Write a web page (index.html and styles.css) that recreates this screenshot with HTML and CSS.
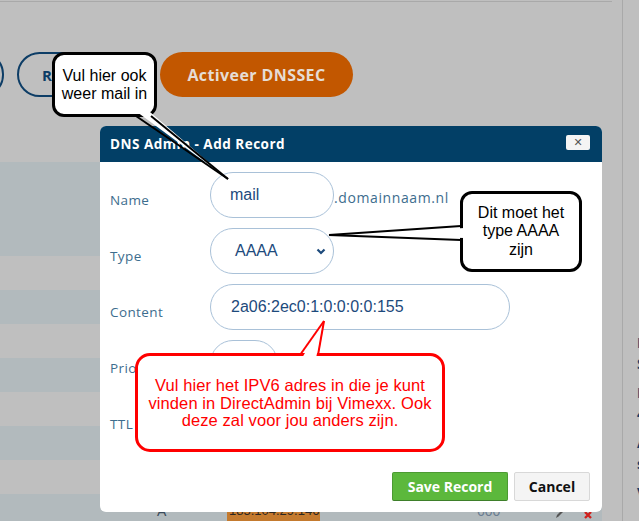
FILE: index.html
```html
<!DOCTYPE html>
<html lang="nl">
<head>
<meta charset="utf-8">
<title>DNS Admin</title>
<link rel="stylesheet" href="styles.css">
</head>
<body>
<div class="page">
  <div class="main">
    <div class="topline"></div>
    <div class="actions">
      <span class="pill pill-outline pill-cut"></span>
      <span class="pill pill-outline pill-records">Records</span>
      <span class="pill pill-orange">Activeer DNSSEC</span>
    </div>
    <div class="table">
      <div class="row row-blue row-head"></div>
      <div class="row"></div>
      <div class="row row-blue"></div>
      <div class="row"></div>
      <div class="row row-blue"></div>
      <div class="row"></div>
      <div class="row row-blue"></div>
      <div class="row"></div>
      <div class="row row-blue row-last">
        <span class="cell-type">A</span>
        <span class="cell-ip">185.104.29.146</span>
        <span class="cell-ttl">600</span>
        <span class="cell-act">
          <svg class="ico" width="10" height="12" viewBox="0 0 10 12"><path d="M1 10 L2 7 L7 2 L8.5 3.5 L3.5 8.5 Z" fill="#555"/></svg>
          <svg class="ico" width="10" height="12" viewBox="0 0 10 12"><path d="M2 4 L8 10 M8 4 L2 10" stroke="#d0201c" stroke-width="2.4"/></svg>
        </span>
      </div>
    </div>
  </div>
  <div class="side">
    <div class="side-item">Records<br>Status</div>
    <div class="side-item">IPv4<br>4 items</div>
    <div class="side-item">AAAA<br>status</div>
    <div class="side-item">Verify</div>
  </div>
</div>

<div class="modal">
  <div class="modal-head">
    <span class="modal-title">DNS Admin - Add Record</span>
    <span class="modal-close">&#x2715;</span>
  </div>
  <div class="modal-body">
    <div class="form-row">
      <label class="form-label">Name</label>
      <div class="form-field">
        <div class="input input-name">mail</div>
        <span class="suffix">.domainnaam.nl</span>
      </div>
    </div>
    <div class="form-row">
      <label class="form-label">Type</label>
      <div class="form-field">
        <div class="input input-select">
          <span>AAAA</span>
          <svg class="chev" width="10" height="7" viewBox="0 0 10 7"><path d="M1.5 1.5 L5 5 L8.5 1.5" fill="none" stroke="#1d4a7c" stroke-width="2.2"/></svg>
        </div>
      </div>
    </div>
    <div class="form-row">
      <label class="form-label">Content</label>
      <div class="form-field">
        <div class="input input-content">2a06:2ec0:1:0:0:0:0:155</div>
      </div>
    </div>
    <div class="form-row">
      <label class="form-label">Priority</label>
      <div class="form-field">
        <div class="input input-small"></div>
      </div>
    </div>
    <div class="form-row">
      <label class="form-label">TTL</label>
      <div class="form-field">
        <div class="input input-small">3600</div>
      </div>
    </div>
    <div class="modal-foot">
      <button class="btn btn-save">Save Record</button>
      <button class="btn btn-cancel">Cancel</button>
    </div>
  </div>
</div>

<div class="callout callout-mail">Vul hier ook<br>weer mail in</div>
<div class="callout callout-type">Dit moet het<br>type AAAA<br>zijn</div>
<div class="callout callout-red">Vul hier het IPV6 adres in die je kunt<br>vinden in DirectAdmin bij Vimexx. Ook<br>deze zal voor jou anders zijn.</div>

<svg class="tails" width="639" height="521" viewBox="0 0 639 521">
  <polygon points="137,112 150,112 228,179" fill="#fff"/>
  <line x1="136" y1="116" x2="228" y2="179" stroke="#000" stroke-width="2"/>
  <line x1="151" y1="116" x2="228" y2="179" stroke="#000" stroke-width="2"/>

  <polygon points="465,228 465,238 329,235" fill="#fff"/>
  <line x1="461" y1="226" x2="329" y2="235" stroke="#000" stroke-width="2"/>
  <line x1="461" y1="240" x2="329" y2="235" stroke="#000" stroke-width="2"/>

  <polygon points="302,358 316,358 324,321" fill="#fff"/>
  <line x1="300" y1="355" x2="324" y2="321" stroke="#ff0000" stroke-width="2"/>
  <line x1="318" y1="355" x2="324" y2="321" stroke="#ff0000" stroke-width="2"/>
</svg>
</body>
</html>
```

FILE: styles.css
```css
* { box-sizing: border-box; }
html, body {
  margin: 0;
  padding: 0;
  width: 639px;
  height: 521px;
  overflow: hidden;
  background: #bfbfbf;
  font-family: "Open Sans", "Noto Sans", sans-serif;
}
.page {
  display: flex;
  width: 639px;
  height: 521px;
}
.main {
  width: 623px;
  flex: none;
  border-right: 1px solid #a9a9a9;
}
.topline {
  margin-top: 1px;
  height: 1px;
  width: 612px;
  background: #a9a9a9;
}
.actions {
  margin-top: 50px;
  height: 45px;
  display: flex;
  align-items: stretch;
}
.pill {
  border-radius: 23px;
  display: flex;
  align-items: center;
  font-weight: 700;
  font-size: 15px;
}
.pill-outline {
  border: 2px solid #0d3d66;
  color: #0d3d66;
}
.pill-cut {
  width: 44px;
  margin-left: -40px;
}
.pill-records {
  margin-left: 13px;
  width: 128px;
  padding-left: 23px;
}
.pill-orange {
  margin-left: 15px;
  width: 193px;
  justify-content: center;
  background: #c25700;
  color: #e6ddd5;
  font-size: 16px;
  letter-spacing: 0.4px;
}
.table {
  margin-top: 65px;
  width: 602px;
}
.row {
  height: 34px;
  background: #bfbfbf;
  display: flex;
  align-items: center;
}
.row-blue { background: #b2babd; }
.row-head { height: 94px; }
.row-last {
  font-family: "Liberation Sans", Arial, sans-serif;
  font-size: 14px;
  color: #3a4a5a;
}
.cell-type { margin-left: 157px; width: 70px; }
.cell-ip {
  background: #c47a2e;
  color: #2c2620;
  font-size: 13px;
  padding: 3px 1px 4px 2px;
  width: 93px;
  white-space: nowrap;
  overflow: hidden;
}
.cell-ttl { margin-left: 157px; width: 78px; color: #6a7d92; }
.cell-act { display: flex; gap: 18px; margin-top: 6px; }
.side {
  flex: 1;
  padding-top: 332px;
  padding-left: 14px;
  color: #163e6a;
  font-weight: 700;
  font-size: 14px;
  line-height: 21px;
  white-space: nowrap;
}
.side-item { margin-bottom: 8px; }

/* modal */
.modal {
  position: absolute;
  left: 100px;
  top: 126px;
  width: 502px;
  height: 386px;
  background: #fff;
  border-radius: 6px;
  overflow: hidden;
}
.modal-head {
  height: 36px;
  background: #023f66;
  display: flex;
  align-items: center;
  justify-content: space-between;
  padding: 0 12px 0 10px;
}
.modal-title {
  color: #fff;
  font-weight: 700;
  font-size: 13.5px;
  letter-spacing: 0.5px;
}
.modal-close {
  width: 24px;
  height: 15px;
  margin-top: -3px;
  background: #f4f4f4;
  border-radius: 2px;
  color: #555;
  font-size: 11px;
  font-weight: 700;
  display: flex;
  align-items: center;
  justify-content: center;
  font-family: "DejaVu Sans", sans-serif;
}
.modal-body {
  padding: 10px 12px 0 10px;
}
.form-row {
  display: grid;
  grid-template-columns: 100px 1fr;
  height: 46px;
  margin-bottom: 10px;
}
.form-label {
  padding-top: 20px;
  font-size: 13.5px;
  line-height: 16px;
  color: #3d6d8e;
  letter-spacing: 0.4px;
}
.form-field {
  display: flex;
  align-items: flex-end;
}
.input {
  height: 46px;
  border: 1px solid #a9c1d8;
  border-radius: 23px;
  display: flex;
  align-items: center;
  font-family: "Liberation Sans", Arial, sans-serif;
  font-size: 16px;
  color: #1d4a7c;
}
.input-name { width: 124px; padding-left: 19px; }
.input-select {
  width: 124px;
  padding: 0 7px 0 24px;
  justify-content: space-between;
}
.chev { margin-top: 1px; }
.input-content { width: 300px; padding-left: 20px; }
.input-small { width: 68px; padding-left: 14px; }
.suffix {
  padding-bottom: 11px;
  font-size: 14px;
  letter-spacing: 0.6px;
  color: #3d6d8e;
}
.modal-foot {
  margin-top: 30px;
  display: flex;
  justify-content: flex-end;
  gap: 6px;
}
.btn {
  height: 29px;
  border-radius: 2px;
  font-family: "Open Sans", sans-serif;
  font-weight: 700;
  font-size: 14px;
  padding: 0;
}
.btn-save {
  width: 116px;
  background: #5cb83c;
  border: 1px solid #4c9a32;
  border-bottom-color: #3e7f2a;
  color: #fff;
}
.btn-cancel {
  width: 76px;
  background: #f4f4f4;
  border: 1px solid #d8d8d8;
  color: #111;
}

/* callouts */
.callout {
  position: absolute;
  background: #fff;
  border: 3px solid #000;
  border-radius: 12px;
  display: flex;
  align-items: center;
  justify-content: center;
  text-align: center;
  font-family: "Liberation Sans", Arial, sans-serif;
  font-size: 16px;
  color: #000;
}
.callout-mail {
  left: 52px;
  top: 52px;
  width: 105px;
  height: 65px;
  line-height: 18px;
}
.callout-type {
  left: 460px;
  top: 191px;
  width: 122px;
  height: 81px;
  line-height: 18.5px;
}
.callout-red {
  left: 135px;
  top: 353px;
  width: 310px;
  height: 99px;
  border-color: #ff0000;
  border-radius: 15px;
  color: #ff0000;
  font-size: 16.5px;
  letter-spacing: 0.1px;
  line-height: 17.5px;
  padding-top: 2px;
}
.tails {
  position: absolute;
  left: 0;
  top: 0;
  pointer-events: none;
}
```
